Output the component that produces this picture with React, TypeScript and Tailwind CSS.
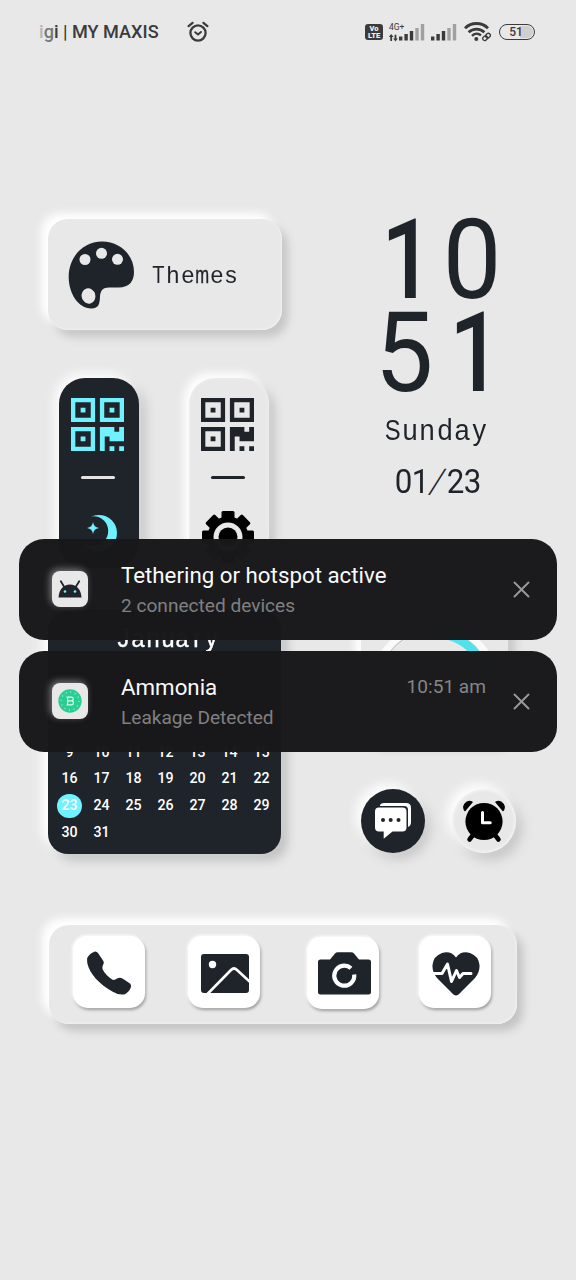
import type { ReactNode } from "react";

const INK = "#1f242b";
const CYAN = "#6ff1ff";

function AlarmStatusIcon() {
  return (
    <svg width="24" height="24" viewBox="0 0 24 24" fill="none" stroke="#3b3b3b" strokeLinecap="round">
      <circle cx="12" cy="13" r="7.6" strokeWidth="2.3" />
      <path d="M2.600 6.200 6.600 2.800M21.400 6.200l-4-3.400" strokeWidth="2.200" />
      <path d="m9.200 12.200 2.800 2.400 3-2.600" strokeWidth="2" strokeLinejoin="round" />
    </svg>
  );
}

function Bars() {
  return (
    <svg width="26" height="17" viewBox="0 0 26 17">
      <g fill="#3b3b3b">
        <rect x="0" y="12.5" width="3.4" height="4" />
        <rect x="5.4" y="10" width="3.4" height="6.5" />
        <rect x="10.8" y="7" width="3.4" height="9.5" />
      </g>
      <g fill="#a0a0a0">
        <rect x="16.3" y="4" width="3.4" height="12.5" />
        <rect x="21.8" y="0" width="3.4" height="16.5" />
      </g>
    </svg>
  );
}

function WifiIcon() {
  return (
    <svg width="28" height="20" viewBox="0 0 28 20" fill="none" stroke="#3b3b3b">
      <path d="M1 6.200a16.500 16.500 0 0 1 23 0" strokeWidth="2.900" />
      <path d="M4.600 10.200a11.500 11.500 0 0 1 15.800 0" strokeWidth="2.700" />
      <path d="M8 13.800a6.700 6.700 0 0 1 9-.4" strokeWidth="2.500" />
      <circle cx="12.300" cy="17" r="2" fill="#3b3b3b" stroke="none" />
      <g strokeWidth="1.300" transform="rotate(-42 22.500 15)">
        <rect x="18.200" y="13" width="5" height="4" rx="2" />
        <rect x="22" y="13" width="5" height="4" rx="2" />
      </g>
    </svg>
  );
}

function StatusBar() {
  return (
    <header className="flex h-16 items-center pl-[39px] pr-[41px] font-['Roboto',sans-serif] text-[#3b3b3b]">
      <div className="w-[147px] whitespace-nowrap pt-[1px] text-[18.100px] font-medium leading-none">
        <span className="text-[#b5b5b5]">i</span>
        <span className="text-[#777]">g</span>i | MY MAXIS
      </div>
      <AlarmStatusIcon />
      <div className="ml-auto flex items-center">
        <div className="flex h-4 w-[18px] flex-col justify-center rounded-[3px] bg-[#3b3b3b] text-center text-[7.500px] font-black leading-[7px] text-[#f0f0f0]">
          <span>Vo</span>
          <span>LTE</span>
        </div>
        <div className="ml-[6px] flex h-[19px] w-[10px] flex-col justify-between">
          <span className="whitespace-nowrap text-[8.500px] leading-[8px]">4G+</span>
          <svg width="10" height="8" viewBox="0 0 10 8" fill="#3b3b3b">
            <path d="M2.200 0 4.600 3H3.100v4H1.300V3H-.2zM6.500 7.400 4.200 4.400h1.400V.8h1.800v3.600h1.400z" />
          </svg>
        </div>
        <Bars />
        <div className="ml-[6px]"><Bars /></div>
        <div className="ml-[7px]"><WifiIcon /></div>
        <div className="ml-[7px] flex h-4 w-9 rounded-full border-[1.600px] border-[#3b3b3b] p-[1px]">
          <div className="flex flex-1 items-center justify-center rounded-full bg-linear-to-r from-transparent from-60% to-[#cfcfcf] to-60% pr-[2px] text-[12px] font-medium leading-none">
            51
          </div>
        </div>
      </div>
    </header>
  );
}

function PaletteIcon() {
  return (
    <svg width="67" height="69" viewBox="0 0 67 69">
      <path
        fill={INK}
        d="M34 .5C52 .5 66 14 66 31c0 9-4.500 15.500-15.500 15.500H41c-6 0-8.700 3.200-9 9-.3 7-1 12-8.500 12C10 67.500 1 52 .7 37 .3 16 15 .5 34 .5Z"
      />
      <g fill="#e8e8e8">
        <circle cx="17" cy="18.500" r="5.500" />
        <circle cx="33.500" cy="12.300" r="5.500" />
        <circle cx="49.500" cy="18.300" r="5.500" />
        <ellipse cx="20.500" cy="55" rx="6.900" ry="7.700" transform="rotate(-15 20.500 55)" />
      </g>
    </svg>
  );
}

function QrIcon({ color }: { color: string }) {
  return (
    <svg width="53" height="53" viewBox="0 0 11 11" fill={color} fillRule="evenodd">
      <path d="M0 0h5v5H0zM.9.9v3.200h3.200V.9zM6 0h5v5H6zM6.900.9v3.200h3.200V.9zM0 6h5v5H0zM.9 6.900v3.200h3.200V6.900z" />
      <path d="M2 2h1v1H2zM8 2h1v1H8zM2 8h1v1H2z" />
      <path d="M6 6h3v1h1V6h1v3H8V8H7v3H6zM8 10h1v1H8zM10 10h1v1h-1z" />
    </svg>
  );
}

function MoonIcon() {
  return (
    <svg width="38" height="38" viewBox="0 0 38 38" fill={CYAN}>
      <mask id="crescent">
        <rect width="38" height="38" fill="#fff" />
        <circle cx="13.500" cy="17" r="14.700" fill="#000" />
      </mask>
      <circle cx="19" cy="19" r="18" mask="url(#crescent)" />
      <path d="M13 8q.7 5.300 6 6-5.300.7-6 6-.7-5.300-6-6 5.300-.7 6-6Z" />
    </svg>
  );
}

function GearIcon() {
  return (
    <svg width="54" height="54" viewBox="-27 -27 54 54">
      {[0, 45, 90, 135].map((a) => (
        <rect key={a} x="-6.500" y="-26" width="13" height="52" rx="1.500" transform={`rotate(${a})`} />
      ))}
      <circle r="20.500" />
      <circle r="14.500" fill="#e8e8e8" />
      <circle r="9.500" />
    </svg>
  );
}

function Pill({ dark, children }: { dark?: boolean; children: ReactNode }) {
  return (
    <div
      className={
        "flex h-[190px] w-20 flex-col items-center rounded-[26px] pr-[3px] pt-5 " +
        (dark
          ? "bg-[#1f242b] shadow-[-4px_-4px_12px_#fff,6px_6px_12px_#c2c2c2]"
          : "bg-[#e8e8e8] shadow-[-5px_-5px_10px_#fff,6px_6px_10px_#c6c6c6,inset_0_0_3px_#f4f4f4]")
      }
    >
      <QrIcon color={dark ? CYAN : INK} />
      <div className={"mt-[25px] h-[3px] w-[34px] rounded-full " + (dark ? "bg-[#e4e4e4]" : "bg-[#1f242b]")} />
      {children}
    </div>
  );
}

/* Each letter is centred in a cell of the same width. */
function Spaced({ text, cell }: { text: string; cell: string }) {
  return (
    <span className="flex font-['Liberation_Sans',sans-serif]">
      {text.split("").map((c, i) => (
        <span key={i} className={"flex justify-center " + cell}>
          <span className={"inline-block " + (c === "m" ? "scale-x-[0.68] [-webkit-text-stroke:0.5px_currentColor]" : c === "T" || c === "S" ? "scale-x-[0.82]" : "scale-x-[0.94]")}>{c}</span>
        </span>
      ))}
    </span>
  );
}

function Calendar() {
  const days = Array.from({ length: 23 }, (_, i) => i + 9);
  return (
    <div className="h-[244px] w-[233px] rounded-[20px] bg-[#1f242b] px-[5px] pt-[13px] font-['Roboto',sans-serif] text-white shadow-[-6px_-6px_12px_#fff,7px_7px_10px_#c4c4c4]">
      <div className="flex justify-center pl-[6px] text-[25px] leading-[30px] [-webkit-text-stroke:0.4px_currentColor]">
        <Spaced text="January" cell="w-[14.600px]" />
      </div>
      <div className="mt-[86px] grid grid-cols-[repeat(7,32px)] auto-rows-[26.700px] place-items-center pl-[0.500px] text-[14.200px] font-medium">
        {days.map((d) => (
          <span
            key={d}
            className={
              "flex items-center justify-center " +
              (d === 23 ? "h-[24px] w-[25px] rounded-full bg-[#6ff1ff]" : "")
            }
          >
            {d}
          </span>
        ))}
      </div>
    </div>
  );
}

function Digits({ text }: { text: string }) {
  return (
    <div className="flex h-[93px] font-['Roboto',sans-serif] text-[111px] leading-[93px]">
      {text.split("").map((c, i) => (
        <span key={i} className="flex w-[68px] justify-center">
          <span className={"inline-block " + (c === "1" ? "translate-x-[4px] scale-x-[0.83] font-medium" : "scale-x-[0.94]")}>{c}</span>
        </span>
      ))}
    </div>
  );
}

function Clock() {
  return (
    <div className="flex h-[292px] flex-col items-center pt-[4px] text-[#1f242b]">
      <Digits text="10" />
      <Digits text="51" />
      <div className="mt-[12px] pr-[4px] text-[29px] leading-9">
        <Spaced text="Sunday" cell="w-[17.200px]" />
      </div>
      <div className="mt-[13px] flex font-['Roboto',sans-serif] text-[34px] leading-10">
        {"01/23".split("").map((c, i) => (
          <span key={i} className="flex w-[17.300px] justify-center">
            <span className={"inline-block " + (c === "/" ? "skew-x-[-14deg] font-light" : "scale-x-[0.92]")}>{c}</span>
          </span>
        ))}
      </div>
    </div>
  );
}

function RingWidget() {
  return (
    <div className="flex h-[147px] w-[147px] items-start justify-center rounded-[20px] bg-[#e8e8e8] pt-[22px] shadow-[-6px_-6px_9px_#fff,7px_5px_10px_#c8c8c8]">
      <svg width="134" height="134" viewBox="-67 -67 134 134" fill="none" className="shrink-0">
        <circle r="60.500" stroke="#fafafa" strokeWidth="7" />
        <circle r="56.500" stroke="#bdbdbd" strokeWidth="1" />
        <path d="M0-52A52 52 0 0 1 52 0" stroke="#4fe3ee" strokeWidth="8.500" />
      </svg>
    </div>
  );
}

function ChatIcon() {
  return (
    <svg width="38" height="38" viewBox="0 0 38 38">
      <path fill="#fff" d="M6 3q1-2 4-2h22q5 0 5 5v14q0 4-3 5V8q0-4-4-4H6Z" />
      <path fill="#fff" d="M5 5.500h23.500q4 0 4 4v16q0 4-4 4H18.500l-8.800 7.300v-7.300H5q-4 0-4-4v-16q0-4 4-4Z" />
      <g fill={INK}>
        <circle cx="9" cy="18" r="2" />
        <circle cx="16.700" cy="18" r="2" />
        <circle cx="24.500" cy="18" r="2" />
      </g>
    </svg>
  );
}

function AlarmIcon() {
  return (
    <svg width="44" height="44" viewBox="0 0 44 44">
      <g stroke="#000" strokeWidth="4.500" strokeLinecap="round">
        <path d="m11 36-3.500 4.500M33 36l3.500 4.500" />
      </g>
      <path d="M3 12.500Q-.5 9 2.500 4.500 6 0 11 3ZM41 12.500q3.500-3.500.5-8Q38 0 33 3Z" />
      <circle cx="22" cy="22.500" r="18.600" />
      <path d="M20.500 13.500v10.300h7.700" fill="none" stroke="#fff" strokeWidth="3" strokeLinecap="round" strokeLinejoin="round" />
    </svg>
  );
}

function Tile({ className, children }: { className: string; children: ReactNode }) {
  return (
    <div
      className={
        "flex size-[72px] items-center justify-center rounded-[15px] bg-white shadow-[-1px_-1px_3px_#fff,1px_2px_3px_#999] " +
        className
      }
    >
      {children}
    </div>
  );
}

function Dock() {
  return (
    <nav className="ml-[49px] mt-[71px] flex h-[99px] w-[468px] rounded-[20px] bg-[#e8e8e8] pl-6 pt-[11px] shadow-[-7px_-7px_9px_#fff,6px_7px_9px_#c4c4c4,inset_-1px_-1px_2px_#f0f0f0]">
      <Tile className="pt-[2px]">
        <svg width="44" height="44" viewBox="0 0 44 44" fill={INK}>
          <path d="M.2 7C2 3.500 5 1.500 8 .5q1.700-.2 3 1.500l5.200 7.700q1.300 2-.2 4.300-1 2-.3 4.500 3 6 10.300 10.500 2.500 0 4.500-1.800 2.500-1 5 .2l7.500 5q1.500 1.500.8 4-2 5-6.500 7-5.500 1-12-3C12 33 3 23 .5 13q-.6-3-.3-6Z" />
        </svg>
      </Tile>
      <Tile className="ml-[43px] pl-[2px] pt-[3px]">
        <svg width="48" height="40" viewBox="0 0 48 40">
          <rect width="48" height="39" rx="3" fill={INK} />
          <circle cx="11.500" cy="10.500" r="3.700" fill="#fff" />
          <path d="M6.500 40 30 16q3-3 6 0l13 12" fill="none" stroke="#fff" strokeWidth="2.600" />
        </svg>
      </Tile>
      <Tile className="ml-[47px] mt-[1px] pl-[2px]">
        <svg width="53" height="43" viewBox="0 0 53 43">
          <path fill={INK} d="M2.500 7.500H12L17 1.500Q18 .3 20 .3h13q2 0 3 1.200l5 6h9.500q2.500 0 2.500 2.500v30q0 2.500-2.500 2.500h-48Q0 42.500 0 40V10q0-2.500 2.500-2.500Z" />
          <path d="M33 16.300A10 10 0 1 0 36.200 22.500" fill="none" stroke="#fff" strokeWidth="4.200" strokeLinecap="butt" />
        </svg>
      </Tile>
      <Tile className="ml-10 pl-[2px] pt-[4px]">
        <svg width="48" height="44" viewBox="0 0 48 44">
          <path fill={INK} d="M24 43.500Q22 43.500 18 39L5 26Q0 20 .5 13 1.500 4 10 1q9-2.500 14 4.500Q29 -1.500 38 1q8.500 3 9.500 12 .500 7-4.500 13L30 39q-4 4.500-6 4.500Z" />
          <path d="M0 21.500h10l5.500-9.500 4 17.500 5-11 3 7 3.500-4H39" fill="none" stroke="#fff" strokeWidth="3" strokeLinecap="round" strokeLinejoin="round" />
        </svg>
      </Tile>
    </nav>
  );
}

function AndroidIcon() {
  return (
    <svg width="24" height="18" viewBox="0 0 24 18">
      <path d="M.5 17.500C1 9.500 5.500 4.500 12 4.500s11 5 11.500 13Z" fill={INK} />
      <path d="M6 6.500 2.800 1.300M18 6.500l3.200-5.200" stroke={INK} strokeWidth="1.800" strokeLinecap="round" />
      <circle cx="7" cy="11.500" r="1.300" fill={CYAN} />
      <circle cx="17" cy="11.500" r="1.300" fill={CYAN} />
    </svg>
  );
}

function BlynkIcon() {
  return (
    <svg width="24" height="24" viewBox="-12 -12 24 24">
      <circle r="11.700" fill="#29cf92" />
      <circle r="9" fill="none" stroke="#a5f0d4" strokeWidth="1.300" strokeDasharray="1 3.712" />
      <path d="M-2.400-4.200v8.400M-3.500-3.800h5q1.700 0 1.700 1.800T1.500-.2h-3.700M1.500-.2q2 0 2 2t-2 2h-5" fill="none" stroke="#d8fff0" strokeWidth="1.200" />
    </svg>
  );
}

function Notification({ icon, title, text, time }: { icon: ReactNode; title: string; text: string; time?: string }) {
  return (
    <article className="flex h-[101px] rounded-[25px] bg-[#18181a]/99 pl-[33px] pr-[26px] font-['Roboto',sans-serif]">
      <div className="mt-8 flex size-9 items-center justify-center rounded-[8px] bg-[#e8e8e8] shadow-[-2px_-2px_7px_#77777a]">
        {icon}
      </div>
      <div className="ml-[33px] flex-1 pt-[22px]">
        <div className="flex h-7 items-start justify-between">
          <h2 className="whitespace-nowrap text-[22.300px] leading-7 text-[#fafafa]">{title}</h2>
          {time && <time className="text-[19.100px] leading-7 text-[#858587]">{time}</time>}
        </div>
        <p className="mt-[4px] text-[19.100px] leading-[26px] text-[#808082]">{text}</p>
      </div>
      <svg className={"mt-[42px] " + (time ? "ml-[27px]" : "ml-5")} width="18" height="18" viewBox="0 0 18 18" fill="none" stroke="#99999b" strokeWidth="1.900" strokeLinecap="round">
        <path d="m1.500 1.500 14 14M15.500 1.500l-14 14" />
      </svg>
    </article>
  );
}

export default function App() {
  return (
    <div className="relative h-[1280px] w-[576px] overflow-hidden bg-[#e8e8e8]">
      <StatusBar />
      <main className="flex pl-12 pt-[146px]">
        <section className="w-[234px] pt-[9px]">
          <div className="flex h-[111px] items-center rounded-[20px] bg-[#e8e8e8] pl-5 pt-[2px] shadow-[-7px_-6px_9px_#fff,6px_7px_9px_#c6c6c6,inset_-1px_-1px_2px_#f0f0f0]">
            <PaletteIcon />
            <span className="ml-4 text-[24.500px] leading-none text-[#1f242b]">
              <Spaced text="Themes" cell="w-[14.600px]" />
            </span>
          </div>
          <div className="mt-12 flex justify-between pl-[11px] pr-[13px]">
            <Pill dark>
              <div className="ml-[2px] mt-[35px]"><MoonIcon /></div>
            </Pill>
            <Pill>
              <div className="mt-[31px]"><GearIcon /></div>
            </Pill>
          </div>
          <div className="mt-[42px]"><Calendar /></div>
        </section>
        <section className="ml-[61px] w-[190px]">
          <Clock />
          <div className="ml-[18px] mt-[95px]"><RingWidget /></div>
          <div className="ml-[18px] mt-[45px] flex gap-[27px]">
            <div className="flex size-16 items-center justify-center rounded-full bg-[#1f242b] shadow-[-5px_-5px_12px_#fff,5px_6px_12px_#c6c6c6]">
              <ChatIcon />
            </div>
            <div className="flex size-16 items-center justify-center rounded-full bg-[#e8e8e8] shadow-[-5px_-5px_12px_#fff,6px_7px_12px_#c6c6c6,inset_0_0_4px_#fff]">
              <AlarmIcon />
            </div>
          </div>
        </section>
      </main>
      <Dock />
      <aside className="absolute left-[19px] top-[539px] flex w-[538px] flex-col gap-[11px]">
        <Notification icon={<AndroidIcon />} title="Tethering or hotspot active" text="2 connected devices" />
        <Notification icon={<BlynkIcon />} title="Ammonia" text="Leakage Detected" time="10:51 am" />
      </aside>
    </div>
  );
}
